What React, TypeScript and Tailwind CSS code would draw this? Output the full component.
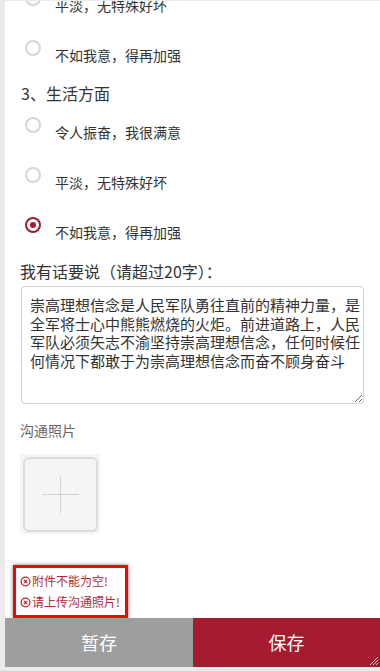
const FONT = '"Noto Sans CJK SC", "Noto Sans", "Liberation Sans", sans-serif';

interface RadioRowProps {
  label: string;
  checked?: boolean;
}

function RadioRow({ label, checked }: RadioRowProps) {
  return (
    <div className="flex h-[50px] items-start pl-[20px]">
      <span
        className={`mt-[7px] flex h-[16px] w-[16px] shrink-0 items-center justify-center rounded-full border-2 ${
          checked ? 'border-[#a51c30]' : 'border-[#d6d6d6]'
        }`}
      >
        {checked && <span className="h-[6px] w-[6px] rounded-full bg-[#a51c30]" />}
      </span>
      <span className="ml-[14px] mt-[12px] text-[14px] leading-[20px] text-[#333]">{label}</span>
    </div>
  );
}

function ErrorIcon() {
  return (
    <svg width="11" height="11" viewBox="0 0 12 12" className="mr-[1px] shrink-0">
      <circle cx="6" cy="6" r="4.8" fill="none" stroke="#b22a3a" strokeWidth="1.4" />
      <path d="M4.2 4.2 L7.8 7.8 M7.8 4.2 L4.2 7.8" stroke="#b22a3a" strokeWidth="1.4" />
    </svg>
  );
}

export default function App() {
  const text =
    '崇高理想信念是人民军队勇往直前的精神力量，是全军将士心中熊熊燃烧的火炬。前进道路上，人民军队必须矢志不渝坚持崇高理想信念，任何时候任何情况下都敢于为崇高理想信念而奋不顾身奋斗';

  return (
    <div className="h-[671px] w-[380px] overflow-hidden bg-[#ebebeb] pt-[1px] pl-[5px] pb-[4px]" style={{ fontFamily: FONT }}>
      <div className="flex h-[666px] flex-col overflow-hidden bg-white">
        <div className="-mt-[18px]">
          <RadioRow label="平淡，无特殊好坏" />
          <RadioRow label="不如我意，得再加强" />
        </div>

        <div className="-mt-[2px] h-[24px] pl-[16px] text-[16px] leading-[24px] text-[#333]">3、生活方面</div>

        <div className="mt-[5px]">
          <RadioRow label="令人振奋，我很满意" />
          <RadioRow label="平淡，无特殊好坏" />
          <RadioRow label="不如我意，得再加强" checked />
        </div>

        <div className="-mt-[1px] h-[24px] pl-[15px] text-[16px] leading-[24px] text-[#333]">我有话要说（请超过20字）：</div>

        <div className="mt-[3px] pl-[16px]">
          <textarea
            readOnly
            value={text}
            className="block h-[118px] w-[343px] resize rounded-[4px] border border-[#d0d0d0] pt-[9px] pl-[8px] pr-[2px] text-[15px] leading-[18.6px] text-[#333] outline-none"
            style={{ fontFamily: FONT }}
          />
        </div>

        <div className="mt-[16px] h-[20px] pl-[15px] text-[14px] leading-[20px] text-[#666]">沟通照片</div>

        <div className="mt-[14px] pl-[15px]">
          <div className="flex h-[80px] w-[80px] items-center justify-center rounded-[3px] bg-[#f5f5f5]">
            <div className="relative flex h-[75px] w-[75px] items-center justify-center rounded-[6px] border-2 border-[#dcdcdc]">
              <span className="absolute h-[1px] w-[37px] bg-[#d3d3d3]" />
              <span className="absolute h-[37px] w-[1px] bg-[#d3d3d3]" />
            </div>
          </div>
        </div>

        <div className="ml-[8px] mt-[31px] flex h-[53px] w-[115px] flex-col justify-center gap-[5px] overflow-visible border-[3px] border-[#ff0000] pl-[4px] shadow-[0_0_4px_rgba(0,0,0,0.5)]">
          <div className="flex items-center whitespace-nowrap text-[12px] leading-[16px] text-[#b22a3a]">
            <ErrorIcon />
            附件不能为空!
          </div>
          <div className="flex items-center whitespace-nowrap text-[12px] leading-[16px] text-[#b22a3a]">
            <ErrorIcon />
            请上传沟通照片!
          </div>
        </div>

        <div className="flex h-[49px] shrink-0">
          <button className="flex w-[188px] items-center justify-center bg-[#9e9e9e] text-[18px] text-white">暂存</button>
          <button className="relative flex flex-1 items-center justify-center bg-[#a51b2f] text-[18px] text-white">
            保存
            <svg width="12" height="12" viewBox="0 0 12 12" className="absolute right-[1px] bottom-[1px]">
              <path d="M11 3 L3 11 M11 6 L6 11 M11 9 L9 11" stroke="#c8c8c8" strokeWidth="1" />
            </svg>
          </button>
        </div>
      </div>
    </div>
  );
}
